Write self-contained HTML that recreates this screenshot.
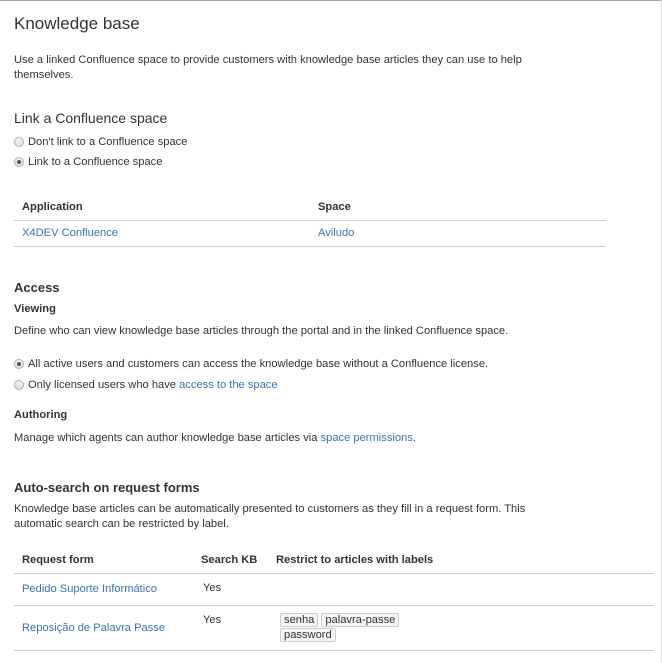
<!DOCTYPE html>
<html><head><meta charset="utf-8"><style>
body{margin:0;width:662px;height:663px;background:#fff;font-family:"Liberation Sans",Arial,sans-serif;color:#333;position:relative;overflow:hidden;font-size:11.15px}
.a{position:absolute;left:14px;white-space:nowrap;line-height:15px}
a{color:#3b73af;text-decoration:none}
.r{position:absolute;left:14px;width:8px;height:8px;border-radius:50%;border:1px solid #b0b0b0;background:linear-gradient(#f4f4f4,#dcdcdc)}
.r.on::after{content:"";position:absolute;left:2px;top:2px;width:4px;height:4px;border-radius:50%;background:#555}
.hl{position:absolute;left:14px;height:1px;background:#ccc}
b{font-weight:bold}
.tag{display:inline-block;border:1px solid #ccc;border-radius:2px;background:#f5f5f5;padding:0 3px;line-height:12px;margin-right:3px;color:#333}
</style></head><body>
<div style="position:absolute;left:0;top:0;width:662px;height:1px;background:#aaa"></div>
<div style="position:absolute;right:0;top:0;width:1px;height:663px;background:#ddd"></div>
<div class="a" style="top:13px;font-size:17px;line-height:22px">Knowledge base</div>
<div class="a" style="top:53px;white-space:normal;width:530px">Use a linked Confluence space to provide customers with knowledge base articles they can use to help themselves.</div>
<div class="a" style="top:109px;font-size:14px;line-height:18px">Link a Confluence space</div>
<div class="r" style="top:137px"></div><div class="a" style="left:28px;top:135px">Don't link to a Confluence space</div>
<div class="r on" style="top:157px"></div><div class="a" style="left:28px;top:155px">Link to a Confluence space</div>
<div class="a" style="left:22px;top:200px"><b>Application</b></div>
<div class="a" style="left:318px;top:200px"><b>Space</b></div>
<div class="hl" style="top:220px;width:592px"></div>
<div class="a" style="left:22px;top:226px"><a>X4DEV Confluence</a></div>
<div class="a" style="left:318px;top:226px"><a>Aviludo</a></div>
<div class="hl" style="top:246px;width:592px"></div>
<div class="a" style="top:279px;font-size:13px;font-weight:bold;line-height:17px">Access</div>
<div class="a" style="top:302px"><b>Viewing</b></div>
<div class="a" style="top:324px">Define who can view knowledge base articles through the portal and in the linked Confluence space.</div>
<div class="r on" style="top:359px"></div><div class="a" style="left:28px;top:357px">All active users and customers can access the knowledge base without a Confluence license.</div>
<div class="r" style="top:380px"></div><div class="a" style="left:28px;top:378px">Only licensed users who have <a>access to the space</a></div>
<div class="a" style="top:408px"><b>Authoring</b></div>
<div class="a" style="top:431px">Manage which agents can author knowledge base articles via <a>space permissions</a>.</div>
<div class="a" style="top:479px;font-size:13px;font-weight:bold;line-height:17px">Auto-search on request forms</div>
<div class="a" style="top:502px;white-space:normal;width:530px">Knowledge base articles can be automatically presented to customers as they fill in a request form. This automatic search can be restricted by label.</div>
<div class="a" style="left:22px;top:553px"><b>Request form</b></div>
<div class="a" style="left:201px;top:553px"><b>Search KB</b></div>
<div class="a" style="left:276px;top:553px"><b>Restrict to articles with labels</b></div>
<div class="hl" style="top:573px;width:640px"></div>
<div class="a" style="left:22px;top:582px"><a>Pedido Suporte Informático</a></div>
<div class="a" style="left:203px;top:581px">Yes</div>
<div class="hl" style="top:605px;width:640px"></div>
<div class="a" style="left:22px;top:621px"><a>Reposição de Palavra Passe</a></div>
<div class="a" style="left:203px;top:613px">Yes</div>
<div class="a" style="left:280px;top:613px;line-height:15px;white-space:normal;width:140px"><span class="tag">senha</span><span class="tag">palavra-passe</span><br><span class="tag">password</span></div>
<div class="hl" style="top:650px;width:640px"></div>
</body></html>
